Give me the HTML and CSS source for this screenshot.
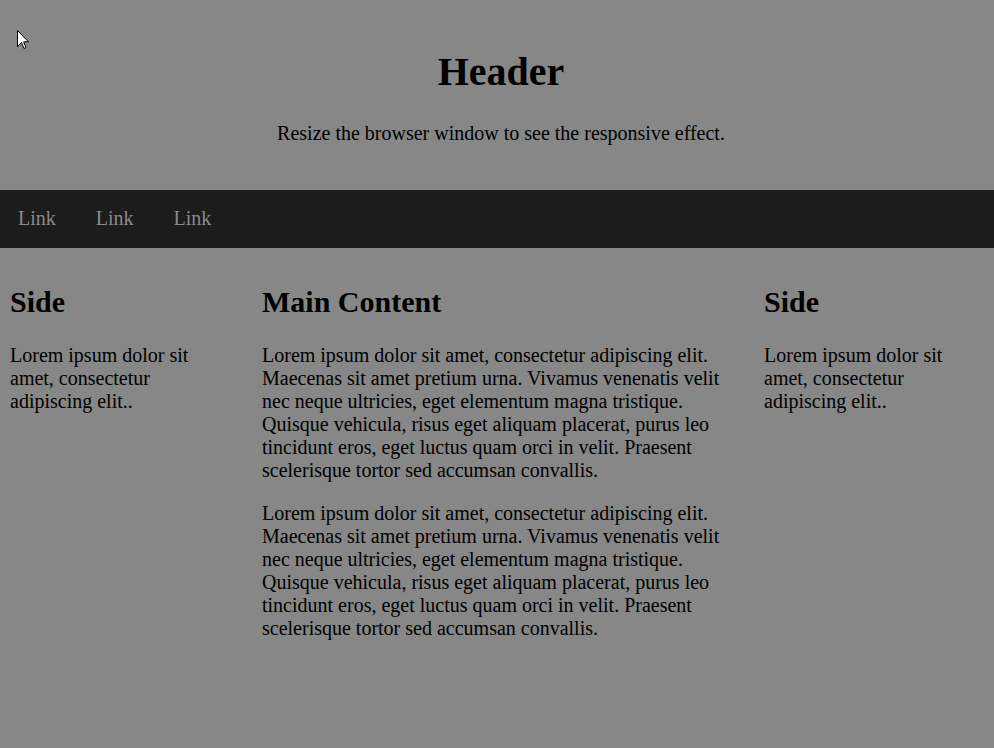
FILE: index.html
```html
<!DOCTYPE html>
<html>
<head>
<meta charset="utf-8">
<link rel="stylesheet" href="styles.css">
</head>
<body>
<div class="header">
  <h1>Header</h1>
  <p>Resize the browser window to see the responsive effect.</p>
</div>
<div class="topnav">
  <a href="#">Link</a>
  <a href="#">Link</a>
  <a href="#">Link</a>
</div>
<div class="row">
  <div class="column side left">
    <h2>Side</h2>
    <p>Lorem ipsum dolor sit amet, consectetur adipiscing elit..</p>
  </div>
  <div class="column middle">
    <h2>Main Content</h2>
    <p>Lorem ipsum dolor sit amet, consectetur adipiscing elit. Maecenas sit amet pretium urna. Vivamus venenatis velit nec neque ultricies, eget elementum magna tristique. Quisque vehicula, risus eget aliquam placerat, purus leo tincidunt eros, eget luctus quam orci in velit. Praesent scelerisque tortor sed accumsan convallis.</p>
    <p>Lorem ipsum dolor sit amet, consectetur adipiscing elit. Maecenas sit amet pretium urna. Vivamus venenatis velit nec neque ultricies, eget elementum magna tristique. Quisque vehicula, risus eget aliquam placerat, purus leo tincidunt eros, eget luctus quam orci in velit. Praesent scelerisque tortor sed accumsan convallis.</p>
  </div>
  <div class="column side">
    <h2>Side</h2>
    <p>Lorem ipsum dolor sit amet, consectetur adipiscing elit..</p>
  </div>
</div>
<svg class="cursor" width="12" height="20" viewBox="0 0 12 20"><path d="M0.5 0.5 L0.5 16.5 L4.5 12.5 L7 18.5 L9 17.6 L6.6 11.8 L11.5 11.8 Z" fill="#fff" stroke="#000" stroke-width="1" stroke-linejoin="miter"/></svg>
</body>
</html>
```
FILE: styles.css
```css
* { box-sizing: border-box; }
html, body { margin: 0; padding: 0; }
body {
  background: #878787;
  color: #000;
  font-family: "Liberation Serif", "Times New Roman", serif;
  font-size: 20px;
  min-height: 748px;
  position: relative;
}
.header {
  background: #878787;
  text-align: center;
  padding: 21px 20px 25px 28px;
}
.header h1 {
  font-size: 40px;
  margin: 27px 0;
}
.header p {
  margin: 20px 0;
}
.topnav {
  background: #1c1c1c;
  display: flex;
  height: 58px;
  align-items: center;
}
.topnav a {
  color: #8a8a8a;
  text-decoration: none;
  padding: 12px 22px 14px 18px;
}
.row {
  display: grid;
  grid-template-columns: 252px 502px 1fr;
}
.column {
  padding: 12px 10px 10px;
}
.column.left {
  padding-right: 30px;
}
.column h2 {
  font-size: 30px;
  margin: 25px 0;
}
.column p {
  margin: 20px 0;
  line-height: 23px;
}
.cursor {
  position: absolute;
  left: 17px;
  top: 30px;
}
```
